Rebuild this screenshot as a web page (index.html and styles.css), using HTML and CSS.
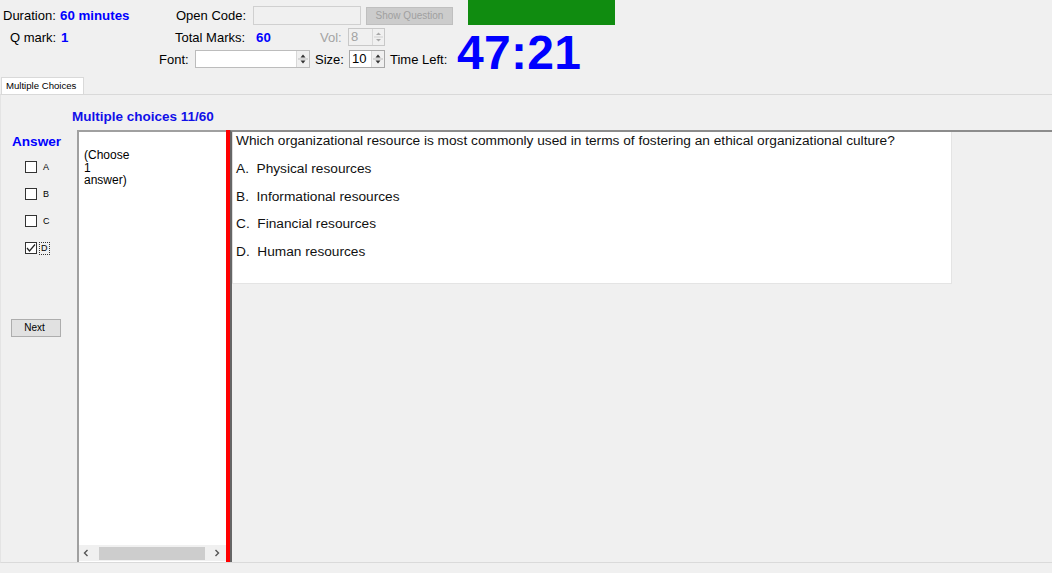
FILE: index.html
```html
<!DOCTYPE html>
<html>
<head>
<meta charset="utf-8">
<link rel="stylesheet" href="styles.css">
</head>
<body>
<div class="page">
  <div class="header">
    <div class="col1">
      <div class="row r1"><span class="lbl-dur">Duration:</span><b class="val">60 minutes</b></div>
      <div class="row r2"><span class="lbl-q">Q mark:</span><b class="val">1</b></div>
    </div>
    <div class="col2">
      <div class="row r1">
        <span class="lbl w-open">Open Code:</span>
        <span class="input in-code"></span>
        <span class="btn-disabled">Show Question</span>
      </div>
      <div class="row r2">
        <span class="lbl w-total">Total Marks:</span>
        <b class="val w-sixty">60</b>
        <span class="lbl gray w-vol">Vol:</span>
        <span class="spin spin-vol disabled"><span class="spin-text">8</span>
          <span class="spin-btns"><svg width="11" height="16" viewBox="0 0 11 16"><path d="M3 6 L5.5 3.5 L8 6Z" fill="#a8a8a8"/><line x1="1" y1="8" x2="10" y2="8" stroke="#d0d0d0"/><path d="M3 10 L5.5 12.5 L8 10Z" fill="#a8a8a8"/></svg></span>
        </span>
      </div>
      <div class="row r3">
        <span class="lbl w-font">Font:</span>
        <span class="input in-font"><span class="spin-btns"><svg width="12" height="16" viewBox="0 0 12 16"><path d="M3.5 6.5 L6 3.5 L8.5 6.5Z" fill="#333"/><line x1="1" y1="8" x2="11" y2="8" stroke="#bbb"/><path d="M3.5 9.5 L6 12.5 L8.5 9.5Z" fill="#333"/></svg></span></span>
        <span class="lbl w-size">Size:</span>
        <span class="spin spin-size"><span class="spin-text">10</span>
          <span class="spin-btns"><svg width="12" height="16" viewBox="0 0 12 16"><path d="M3.5 6.5 L6 3.5 L8.5 6.5Z" fill="#333"/><line x1="1" y1="8" x2="11" y2="8" stroke="#bbb"/><path d="M3.5 9.5 L6 12.5 L8.5 9.5Z" fill="#333"/></svg></span>
        </span>
        <span class="lbl w-left">Time Left:</span>
      </div>
    </div>
    <div class="col3">
      <div class="green"></div>
      <div class="timer">47:21</div>
    </div>
  </div>

  <div class="tabs"><div class="tab">Multiple Choices</div></div>

  <div class="panel">
    <div class="title">Multiple choices 11/60</div>
    <div class="body">
      <div class="sidebar">
        <div class="answer">Answer</div>
        <div class="opts">
          <div class="opt"><span class="cb"></span><span class="ol">A</span></div>
          <div class="opt"><span class="cb"></span><span class="ol">B</span></div>
          <div class="opt"><span class="cb"></span><span class="ol">C</span></div>
          <div class="opt"><span class="cb"><svg width="10" height="10" viewBox="0 0 10 10"><polyline points="1,5 3.5,8 9,1.5" fill="none" stroke="#222" stroke-width="1.2"/></svg></span><span class="ol focus">D</span></div>
        </div>
        <div class="next">Next</div>
      </div>
      <div class="leftpanel">
        <div class="choose">(Choose<br>1<br>answer)</div>
        <div class="hscroll">
          <svg class="arrow" width="10" height="10" viewBox="0 0 10 10"><polyline points="6.5,2 3.5,5 6.5,8" fill="none" stroke="#555" stroke-width="1.4"/></svg>
          <span class="thumb"></span>
          <svg class="arrow" width="10" height="10" viewBox="0 0 10 10"><polyline points="3.5,2 6.5,5 3.5,8" fill="none" stroke="#555" stroke-width="1.4"/></svg>
        </div>
      </div>
      <div class="redbar"></div>
      <div class="rightpanel">
        <div class="qbox">
          <div class="q">Which organizational resource is most commonly used in terms of fostering an ethical organizational culture?</div>
          <div class="a">A.  Physical resources</div>
          <div class="a">B.  Informational resources</div>
          <div class="a">C.  Financial resources</div>
          <div class="a">D.  Human resources</div>
        </div>
      </div>
    </div>
  </div>
</div>
</body>
</html>
```

FILE: styles.css
```css
* { box-sizing: border-box; }
html, body { margin: 0; padding: 0; }
body {
  background: #f0f0f0;
  font-family: "Liberation Sans", Arial, sans-serif;
  font-size: 13px;
  color: #000;
  width: 1052px;
  height: 573px;
  overflow: hidden;
}
.page { width: 1052px; height: 573px; }

.header { display: flex; height: 77px; }
.col1 { width: 155px; padding-top: 5px; padding-left: 3px; }
.col2 { width: 302px; padding-top: 5px; }
.col3 { display: flex; flex-direction: column; padding-left: 11px; }

.row { display: flex; align-items: center; white-space: nowrap; }
.r1 { height: 21px; }
.r2 { height: 22px; }
.r3 { height: 22px; }

.val { color: #0000ff; font-weight: bold; font-size: 13.3px; }
.lbl-dur { width: 57px; }
.lbl-q { width: 51px; margin-left: 7px; }

.lbl { display: inline-block; }
.gray { color: #a3a3a3; }
.w-open { width: 77px; margin-left: 21px; }
.w-total { width: 81px; margin-left: 20px; }
.w-sixty { width: 64px; }
.w-vol { width: 28px; }
.w-font { width: 36px; margin-left: 4px; }
.w-size { width: 34px; margin-left: 5px; }
.w-left { margin-left: 5px; }

.input {
  display: inline-block;
  background: #fff;
  border: 1px solid #bcbcbc;
  position: relative;
}
.in-code { width: 108px; height: 19px; background: #f0f0f0; border-color: #d0d0d0; }
.in-font { width: 115px; height: 18px; display: flex; justify-content: flex-end; }

.btn-disabled {
  display: inline-flex;
  align-items: center;
  justify-content: center;
  margin-left: 5px;
  width: 87px;
  height: 18px;
  background: #cccccc;
  border: 1px solid #bfbfbf;
  color: #a0a0a0;
  font-size: 10px;
}

.spin {
  display: inline-flex;
  height: 18px;
  border: 1px solid #a8a8a8;
  background: #fff;
  justify-content: space-between;
}
.spin-vol { width: 37px; background: #f0f0f0; border-color: #c8c8c8; color: #a3a3a3; }
.spin-size { width: 36px; }
.spin-text { padding-left: 2px; line-height: 16px; }
.spin-btns { display: flex; align-items: center; height: 16px; border-left: 1px solid #d8d8d8; background: #f0f0f0; }

.green { width: 147px; height: 25px; background: #108c10; }
.timer {
  margin-top: 4px;
  margin-left: -11px;
  font-size: 48px;
  line-height: 48px;
  font-weight: bold;
  color: #0000ff;
  letter-spacing: 0.3px;
}

.tabs { height: 17px; display: flex; }
.tab {
  margin-left: 1px;
  width: 83px;
  height: 17px;
  background: #fff;
  border: 1px solid #d9d9d9;
  border-bottom: none;
  font-size: 9.6px;
  line-height: 16px;
  padding-left: 4px;
  white-space: nowrap;
}

.panel {
  height: 469px;
  border-top: 1px solid #d9d9d9;
  border-bottom: 1px solid #dadada;
  border-left: 1px solid #e4e4e4;
  display: flex;
  flex-direction: column;
}
.title {
  height: 35px;
  padding-top: 14px;
  padding-left: 71px;
  font-size: 13.5px;
  line-height: 15px;
  font-weight: bold;
  color: #1010e8;
}
.body { display: flex; height: 432px; }

.sidebar { width: 76px; padding-top: 4px; display: flex; flex-direction: column; }
.answer { padding-left: 11px; font-size: 13.6px; line-height: 16px; font-weight: bold; color: #0000ff; }
.opts { margin-top: 11px; padding-left: 24px; display: flex; flex-direction: column; gap: 15px; }
.opt { display: flex; align-items: center; height: 12px; }
.cb {
  width: 12px; height: 12px;
  border: 1px solid #333;
  background: #fff;
  display: flex; align-items: center; justify-content: center;
}
.ol { font-size: 9px; margin-left: 5px; line-height: 11px; padding: 0 1px; }
.focus { outline: 1px dotted #333; margin-left: 3px; }
.next {
  margin-top: 65px;
  margin-left: 10px;
  width: 50px;
  height: 18px;
  background: #e1e1e1;
  border: 1px solid #adadad;
  font-size: 10px;
  line-height: 16px;
  padding-right: 3px;
  text-align: center;
}

.leftpanel {
  width: 149px;
  background: #fff;
  border-left: 2px solid #a0a0a0;
  border-top: 2px solid #a0a0a0;
  display: flex;
  flex-direction: column;
  justify-content: space-between;
}
.choose { padding-top: 17px; padding-left: 5px; font-size: 12px; line-height: 12.5px; }
.hscroll {
  height: 16px;
  margin-bottom: 1px;
  background: #f0f0f0;
  display: flex;
  align-items: center;
  padding: 0 4px 0 2px;
  justify-content: space-between;
}
.arrow { display: block; }
.thumb { width: 106px; height: 13px; background: #cdcdcd; }

.redbar { width: 4px; background: #ff0000; }
.rightpanel {
  flex: 1;
  border-left: 2px solid #666;
  border-top: 2px solid #8c8c8c;
}
.qbox {
  width: 720px;
  height: 152px;
  background: #fff;
  border-left: 1px solid #dcdcdc;
  border-right: 1px solid #e4e4e4;
  border-bottom: 1px solid #e4e4e4;
  padding-left: 3px;
  padding-top: 1px;
  font-size: 13.7px;
  color: #111;
}
.q { line-height: 15px; }
.a { line-height: 15px; margin-top: 12.75px; white-space: pre; }
```
